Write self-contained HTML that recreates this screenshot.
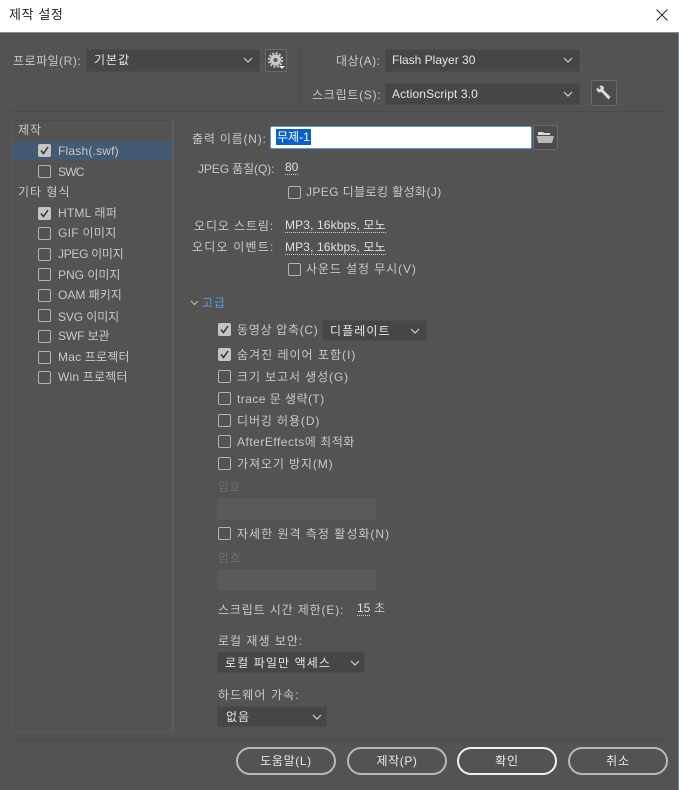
<!DOCTYPE html>
<html lang="ko"><head><meta charset="utf-8"><style>
html,body{margin:0;padding:0}
body{width:679px;height:790px;overflow:hidden;background:#535353;position:relative;font-family:"Liberation Sans","Noto Sans CJK KR",sans-serif;font-size:12px;color:#c8c8c8}
.t{position:absolute;white-space:nowrap;line-height:16px;height:16px}
.d{color:#6d6d6d}
.u{border-bottom:1px dotted #cfcfcf;color:#e0e0e0;line-height:14px;height:14px}
.c{position:absolute;width:11px;height:11px;border:1px solid #b4b4b4;border-radius:2px}
.k{position:absolute;width:13px;height:13px;background:#c4c4c4;border-radius:2px}
.k svg{position:absolute;left:0;top:0}
.s{position:absolute;background:#464646;border:1px solid #4c4c4c;box-sizing:border-box;color:#e6e6e6;line-height:20px;padding-left:6px;white-space:nowrap}
.s svg{position:absolute;right:6px;top:7px}
.b{position:absolute;box-sizing:border-box;height:28px;top:747px;border:2px solid #b8b8b8;border-radius:14px;text-align:center;line-height:24px;color:#e8e8e8}
.l{position:absolute;background:#4a4a4a}
.ib{position:absolute;box-sizing:border-box;border:1px solid #6a6a6a;border-radius:2px;background:#4c4c4c}
</style></head><body>
<div style="position:absolute;left:0;top:0;width:679px;height:32px;background:#fff;border-bottom:1px solid #8c8c8c"></div>
<div class="t" style="left:9px;top:7px;font-size:13px;color:#222;letter-spacing:.6px">제작 설정</div>
<svg style="position:absolute;left:656px;top:9px" width="12" height="12"><path d="M.5.5L11.5 11.5M11.5.5L.5 11.5" stroke="#222" fill="none"/></svg>
<div style="position:absolute;left:678px;top:33px;width:1px;height:757px;background:#6f8296"></div>

<div class="t" style="left:13px;top:53px;letter-spacing:.5px">프로파일(R):</div>
<div class="s" style="left:86px;top:49px;width:174px;height:23px;padding-left:7px;letter-spacing:1px">기본값<svg width="10" height="6"><path d="M1 1L5 5L9 1" stroke="#d0d0d0" fill="none" stroke-width="1.2"/></svg></div>
<div class="ib" style="left:265px;top:49px;width:22px;height:23px"></div>
<svg style="position:absolute;left:267px;top:51px" width="19" height="19" viewBox="0 0 19 19"><circle cx="8.5" cy="9" r="5.5" fill="#c9c9c9"/><circle cx="8.5" cy="9" r="6.7" fill="none" stroke="#c9c9c9" stroke-width="2" stroke-dasharray="2 1.5"/><circle cx="8.5" cy="9" r="2" fill="#5a5a5a"/><path d="M12 15H18L15 18Z" fill="#e8e8e8"/></svg>
<div class="l" style="left:299px;top:48px;width:1px;height:58px"></div>

<div class="t" style="left:336px;top:53px;letter-spacing:.5px">대상(A):</div>
<div class="s" style="left:385px;top:49px;width:195px;height:23px">Flash Player 30<svg width="10" height="6"><path d="M1 1L5 5L9 1" stroke="#d0d0d0" fill="none" stroke-width="1.2"/></svg></div>
<div class="t" style="left:312px;top:87px;letter-spacing:.75px">스크립트(S):</div>
<div class="s" style="left:385px;top:83px;width:195px;height:22px;letter-spacing:.12px">ActionScript 3.0<svg width="10" height="6"><path d="M1 1L5 5L9 1" stroke="#d0d0d0" fill="none" stroke-width="1.2"/></svg></div>
<div class="ib" style="left:591px;top:80px;width:26px;height:26px"></div>
<svg style="position:absolute;left:595px;top:84px" width="18" height="18" viewBox="0 0 18 18"><path d="M4 2L7 1.5L9 3.5L8.5 6L15.5 13L13.5 15.5L6.5 8L3.5 8.5L1.5 6L2 3.5L4.5 5.5L6 4Z" fill="#dcdcdc"/></svg>
<div class="l" style="left:11px;top:111px;width:657px;height:1px"></div>

<div class="l" style="left:11px;top:120px;width:162px;height:1px;background:#4c4c4c"></div>
<div class="l" style="left:11px;top:120px;width:1px;height:611px;background:#5a5a5a"></div>
<div class="l" style="left:172px;top:120px;width:2px;height:611px;background:#5c5c5c"></div>
<div class="l" style="left:11px;top:731px;width:163px;height:1px;background:#5c5c5c"></div>
<div class="l" style="left:11px;top:740px;width:657px;height:1px;background:#4a4a4a"></div>

<div class="t" style="left:18px;top:122px;letter-spacing:1px">제작</div>
<div style="position:absolute;left:12px;top:141px;width:160px;height:19px;background:#445a72"></div>
<div class="k" style="left:38px;top:144px"><svg width="13" height="13"><path d="M3 6.5L5.5 9.5L10 3" stroke="#333" fill="none" stroke-width="1.5"/></svg></div>
<div class="t" style="left:58px;top:143px;letter-spacing:.2px">Flash(.swf)</div>
<div class="c" style="left:38px;top:165px"></div><div class="t" style="left:58px;top:164px;letter-spacing:-.8px">SWC</div>
<div class="t" style="left:18px;top:184px;letter-spacing:1px">기타 형식</div>
<div class="k" style="left:38px;top:207px"><svg width="13" height="13"><path d="M3 6.5L5.5 9.5L10 3" stroke="#333" fill="none" stroke-width="1.5"/></svg></div>
<div class="t" style="left:58px;top:205px;letter-spacing:.2px">HTML 래퍼</div>
<div class="c" style="left:38px;top:227px"></div><div class="t" style="left:58px;top:225px;letter-spacing:.3px">GIF 이미지</div>
<div class="c" style="left:38px;top:248px"></div><div class="t" style="left:58px;top:246px;letter-spacing:-.3px">JPEG 이미지</div>
<div class="c" style="left:38px;top:268px"></div><div class="t" style="left:58px;top:267px">PNG 이미지</div>
<div class="c" style="left:38px;top:289px"></div><div class="t" style="left:58px;top:287px">OAM 패키지</div>
<div class="c" style="left:38px;top:309px"></div><div class="t" style="left:58px;top:309px;letter-spacing:-.1px">SVG 이미지</div>
<div class="c" style="left:38px;top:330px"></div><div class="t" style="left:58px;top:328px;letter-spacing:-.1px">SWF 보관</div>
<div class="c" style="left:38px;top:351px"></div><div class="t" style="left:58px;top:349px;letter-spacing:.2px">Mac 프로젝터</div>
<div class="c" style="left:38px;top:371px"></div><div class="t" style="left:58px;top:369px;letter-spacing:.2px">Win 프로젝터</div>

<div class="t" style="left:192px;top:131px;letter-spacing:.8px">출력 이름(N):</div>
<div style="position:absolute;box-sizing:border-box;left:270px;top:126px;width:262px;height:23px;background:#fff;border:1px solid #5d9bd8;border-radius:2px"></div>
<div class="t" style="left:276px;top:129px;background:#0a60c8;color:#fff;padding:0 1px">무제-1</div>
<div class="ib" style="left:533px;top:125px;width:25px;height:25px"></div>
<svg style="position:absolute;left:536px;top:130px" width="19" height="15" viewBox="0 0 19 15"><path d="M2 4V2H7L8 3H14V5H2Z" fill="#d8d8d8"/><path d="M.5 6H18L16 13H2.5Z" fill="#b8b8b8"/></svg>

<div class="t" style="left:198px;top:161px;letter-spacing:-.1px">JPEG 품질(Q):</div>
<div class="t u" style="left:285px;top:160px">80</div>
<div class="c" style="left:288px;top:186px"></div><div class="t" style="left:306px;top:184px;letter-spacing:.4px">JPEG 디블로킹 활성화(J)</div>
<div class="t" style="left:194px;top:218px;letter-spacing:.9px">오디오 스트림:</div>
<div class="t u" style="left:285px;top:218px;letter-spacing:.13px">MP3, 16kbps, 모노</div>
<div class="t" style="left:192px;top:239px;letter-spacing:1.2px">오디오 이벤트:</div>
<div class="t u" style="left:285px;top:240px;letter-spacing:.13px">MP3, 16kbps, 모노</div>
<div class="c" style="left:288px;top:263px"></div><div class="t" style="left:306px;top:261px;letter-spacing:.9px">사운드 설정 무시(V)</div>

<svg style="position:absolute;left:190px;top:300px" width="9" height="6"><path d="M1 1L4.5 4.5L8 1" stroke="#c0c0c0" fill="none"/></svg>
<div class="t" style="left:202px;top:295px;color:#5a9bdc;letter-spacing:1px">고급</div>

<div class="k" style="left:218px;top:323px"><svg width="13" height="13"><path d="M3 6.5L5.5 9.5L10 3" stroke="#333" fill="none" stroke-width="1.5"/></svg></div>
<div class="t" style="left:237px;top:322px;letter-spacing:.7px">동영상 압축(C)</div>
<div class="s" style="left:322px;top:320px;width:105px;height:21px;padding-left:7px;letter-spacing:1.1px">디플레이트<svg width="10" height="6"><path d="M1 1L5 5L9 1" stroke="#d0d0d0" fill="none" stroke-width="1.2"/></svg></div>
<div class="k" style="left:218px;top:348px"><svg width="13" height="13"><path d="M3 6.5L5.5 9.5L10 3" stroke="#333" fill="none" stroke-width="1.5"/></svg></div>
<div class="t" style="left:237px;top:347px;letter-spacing:1px">숨겨진 레이어 포함(I)</div>
<div class="c" style="left:218px;top:370px"></div><div class="t" style="left:237px;top:369px;letter-spacing:.9px">크기 보고서 생성(G)</div>
<div class="c" style="left:218px;top:392px"></div><div class="t" style="left:237px;top:391px;letter-spacing:.45px">trace 문 생략(T)</div>
<div class="c" style="left:218px;top:414px"></div><div class="t" style="left:237px;top:413px;letter-spacing:.9px">디버깅 허용(D)</div>
<div class="c" style="left:218px;top:435px"></div><div class="t" style="left:237px;top:434px;letter-spacing:.5px">AfterEffects에 최적화</div>
<div class="c" style="left:218px;top:457px"></div><div class="t" style="left:237px;top:456px;letter-spacing:.9px">가져오기 방지(M)</div>
<div class="t d" style="left:218px;top:479px;letter-spacing:.5px">암호:</div>
<div style="position:absolute;left:217px;top:498px;width:159px;height:22px;background:#5a5a5a"></div>
<div class="c" style="left:218px;top:527px"></div><div class="t" style="left:237px;top:526px;letter-spacing:1px">자세한 원격 측정 활성화(N)</div>
<div class="t d" style="left:218px;top:550px;letter-spacing:.5px">암호:</div>
<div style="position:absolute;left:217px;top:569px;width:159px;height:22px;background:#5a5a5a"></div>
<div class="t" style="left:218px;top:602px;letter-spacing:.85px">스크립트 시간 제한(E):</div>
<div class="t u" style="left:357px;top:601px">15</div>
<div class="t" style="left:374px;top:600px">초</div>
<div class="t" style="left:218px;top:633px;letter-spacing:1px">로컬 재생 보안:</div>
<div class="s" style="left:217px;top:652px;width:148px;height:21px;padding-left:7px;letter-spacing:1.1px">로컬 파일만 액세스<svg style="right:4px" width="10" height="6"><path d="M1 1L5 5L9 1" stroke="#d0d0d0" fill="none" stroke-width="1.2"/></svg></div>
<div class="t" style="left:218px;top:687px;letter-spacing:1.1px">하드웨어 가속:</div>
<div class="s" style="left:217px;top:706px;width:110px;height:21px;padding-left:8px;letter-spacing:1px">없음<svg style="right:4px" width="10" height="6"><path d="M1 1L5 5L9 1" stroke="#d0d0d0" fill="none" stroke-width="1.2"/></svg></div>

<div class="b" style="left:236px;width:100px;letter-spacing:.6px">도움말(L)</div>
<div class="b" style="left:347px;width:100px;letter-spacing:.6px">제작(P)</div>
<div class="b" style="left:457px;width:100px;border-color:#f0f0f0;color:#f0f0f0;letter-spacing:.8px">확인</div>
<div class="b" style="left:568px;width:100px;letter-spacing:.8px">취소</div>
</body></html>
